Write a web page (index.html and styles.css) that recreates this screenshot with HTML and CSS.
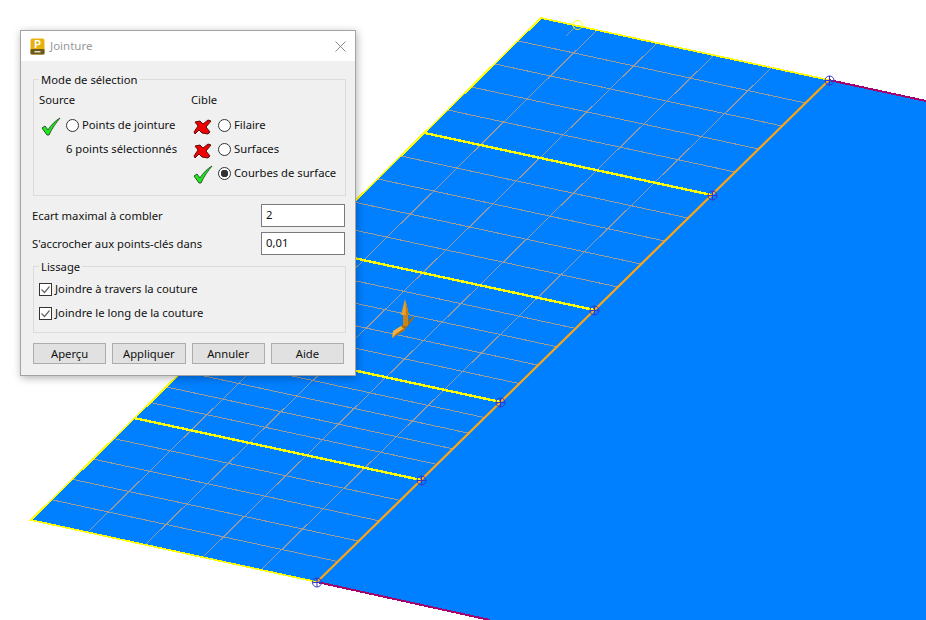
FILE: index.html
```html
<!DOCTYPE html>
<html lang="fr">
<head>
    <meta charset="UTF-8">
    <meta name="viewport" content="width=device-width, initial-scale=1.0">
    <title>Jointure</title>
    <link rel="stylesheet" href="styles.css">
</head>
<body>
    <svg class="viewport" width="926" height="620" viewBox="0 0 926 620">
        <!-- surfaces -->
        <polygon class="face" points="829,80 926,101 926,620 490,620 317,582"/>
        <polygon class="face" points="541,18 829,80 317,582 31,520"/>
        <line class="free-edge" x1="829" y1="80" x2="926" y2="101"/>
        <line class="free-edge" x1="317" y1="582" x2="490" y2="620"/>

        <!-- isoparms along the seam -->
        <line class="iso-along" x1="577" y1="25" x2="566" y2="36"/>
        <line class="iso-along" x1="597" y1="30" x2="88" y2="532"/>
        <line class="iso-along" x1="657" y1="43" x2="145" y2="545"/>
        <line class="iso-along" x1="713" y1="56" x2="203" y2="557"/>
        <line class="iso-along" x1="771" y1="68" x2="261" y2="570"/>

        <!-- isoparms across the seam -->
        <line class="iso-across" x1="518.5" y1="41" x2="805.5" y2="103"/>
        <line class="iso-across" x1="495" y1="64" x2="782" y2="126"/>
        <line class="iso-across" x1="471.6" y1="87" x2="758.6" y2="149"/>
        <line class="iso-across" x1="448" y1="110" x2="735" y2="172"/>
        <line class="iso-across" x1="401" y1="156" x2="688" y2="218"/>
        <line class="iso-across" x1="378" y1="179" x2="665" y2="241"/>
        <line class="iso-across" x1="354" y1="202" x2="641" y2="264"/>
        <line class="iso-across" x1="331" y1="225" x2="618" y2="287"/>
        <line class="iso-across" x1="288.6" y1="266.4" x2="575.6" y2="328.4"/>
        <line class="iso-across" x1="269.9" y1="284.8" x2="556.9" y2="346.8"/>
        <line class="iso-across" x1="251" y1="303.2" x2="538" y2="365.2"/>
        <line class="iso-across" x1="232.3" y1="321.6" x2="519.3" y2="383.6"/>
        <line class="iso-across" x1="197.7" y1="355.6" x2="484.7" y2="417.6"/>
        <line class="iso-across" x1="181.7" y1="371.2" x2="468.7" y2="433.2"/>
        <line class="iso-across" x1="165.8" y1="386.8" x2="452.8" y2="448.8"/>
        <line class="iso-across" x1="150" y1="402.4" x2="437" y2="464.4"/>
        <line class="iso-across" x1="113" y1="438.4" x2="400" y2="500.4"/>
        <line class="iso-across" x1="92" y1="458.8" x2="379" y2="520.8"/>
        <line class="iso-across" x1="72" y1="479.2" x2="359" y2="541.2"/>
        <line class="iso-across" x1="51" y1="499.6" x2="338" y2="561.6"/>

        <!-- selected curves -->
        <polyline class="outline" points="829,80 541,18 31,520 317,582"/>
        <line class="selected" x1="424.7" y1="133" x2="711.7" y2="195"/>
        <line class="selected" x1="307.4" y1="248" x2="594.4" y2="310"/>
        <line class="selected" x1="213.6" y1="340" x2="500.6" y2="402"/>
        <line class="selected" x1="134" y1="418" x2="421" y2="480"/>
        <line class="seam" x1="829" y1="80" x2="317" y2="582"/>

        <!-- join points -->
        <g class="join-point"><circle cx="829.5" cy="80.5" r="4.5"/><path d="M825 80.5h9M829.5 76v9"/></g>
        <g class="join-point"><circle cx="712.5" cy="195.5" r="4.5"/><path d="M708 195.5h9M712.5 191v9"/></g>
        <g class="join-point"><circle cx="594.5" cy="310.5" r="4.5"/><path d="M590 310.5h9M594.5 306v9"/></g>
        <g class="join-point"><circle cx="500.5" cy="402.5" r="4.5"/><path d="M496 402.5h9M500.5 398v9"/></g>
        <g class="join-point"><circle cx="421.5" cy="480.5" r="4.5"/><path d="M417 480.5h9M421.5 476v9"/></g>
        <g class="join-point"><circle cx="317" cy="582.5" r="4.5"/><path d="M312.5 582.5h9M317 578v9"/></g>
        <circle class="start-point" cx="577.5" cy="25" r="4.5"/>

        <!-- manipulator -->
        <path fill="#a96c0a" d="M413 316l1 2-7 9-4 4-3-3 5-6 0-6h3l1 6z"/>
        <path fill="#c98415" d="M403 314h5v12h-5z"/>
        <path fill="#e8a02c" d="M405 299l4 16h-8z"/>
        <path fill="#c47e12" d="M405.500 300l3.500 15h-3z"/>
        <path fill="#f4b040" d="M392 338l1-7 8-5 4 4z"/>
        <path fill="#a86a0c" d="M392 338l13-8-2-1-7 5z"/>
    </svg>

    <div class="dialog">
        <div class="titlebar">
            <svg class="app-icon" width="15" height="17" viewBox="0 0 15 17">
                <rect x="0.5" y="0.5" width="14" height="16" rx="2" fill="#e8b10e"/>
                <rect x="0.5" y="11" width="14" height="5.500" rx="1" fill="#6b5a20"/>
                <rect x="4.500" y="13" width="6" height="1.500" fill="#e8dcae"/>
                <text class="app-letter" x="7.500" y="9.500" text-anchor="middle">P</text>
            </svg>
            <span class="title">Jointure</span>
            <svg class="close" width="11" height="11" viewBox="0 0 11 11"><path d="M.5.5l10 10M10.500.5l-10 10"/></svg>
        </div>
        <div class="dialog-body">
            <fieldset class="group group-mode">
                <legend>Mode de sélection</legend>
                <div class="mode-grid">
                    <div class="mode-col mode-source">
                        <div class="mode-head">Source</div>
                        <div class="mode-row">
                            <svg class="status" width="20" height="20" viewBox="0 0 20 20"><path class="tick" d="M1 11l3-2 3 4C10 8 14 4 19 1c-4 5-8 10-11 17h-2z"/></svg>
                            <span class="radio"></span>
                            <span>Points de jointure</span>
                        </div>
                        <div class="mode-row mode-note">6 points sélectionnés</div>
                    </div>
                    <div class="mode-col mode-target">
                        <div class="mode-head">Cible</div>
                        <div class="mode-row">
                            <svg class="status" width="20" height="20" viewBox="0 0 20 20"><path class="cross" d="M2 5l5-1 3 3 5-4 3 1-5 6 4 5-2 2-6-1-3-3-4 4-1-2 4-6z"/></svg>
                            <span class="radio"></span>
                            <span>Filaire</span>
                        </div>
                        <div class="mode-row">
                            <svg class="status" width="20" height="20" viewBox="0 0 20 20"><path class="cross" d="M2 5l5-1 3 3 5-4 3 1-5 6 4 5-2 2-6-1-3-3-4 4-1-2 4-6z"/></svg>
                            <span class="radio"></span>
                            <span>Surfaces</span>
                        </div>
                        <div class="mode-row">
                            <svg class="status" width="20" height="20" viewBox="0 0 20 20"><path class="tick" d="M1 11l3-2 3 4C10 8 14 4 19 1c-4 5-8 10-11 17h-2z"/></svg>
                            <span class="radio radio-on"></span>
                            <span>Courbes de surface</span>
                        </div>
                    </div>
                </div>
            </fieldset>

            <div class="field first">
                <label>Ecart maximal à combler</label>
                <input class="value" type="text" value="2">
            </div>
            <div class="field">
                <label>S'accrocher aux points-clés dans</label>
                <input class="value" type="text" value="0,01">
            </div>

            <fieldset class="group group-smooth">
                <legend>Lissage</legend>
                <div class="check-row">
                    <svg class="checkbox" width="13" height="13" viewBox="0 0 13 13"><rect x=".5" y=".5" width="12" height="12"/><path d="M2.500 6.500l3 3 5-6"/></svg>
                    <span>Joindre à travers la couture</span>
                </div>
                <div class="check-row">
                    <svg class="checkbox" width="13" height="13" viewBox="0 0 13 13"><rect x=".5" y=".5" width="12" height="12"/><path d="M2.500 6.500l3 3 5-6"/></svg>
                    <span>Joindre le long de la couture</span>
                </div>
            </fieldset>

            <div class="buttons">
                <button>Aperçu</button>
                <button>Appliquer</button>
                <button>Annuler</button>
                <button>Aide</button>
            </div>
        </div>
    </div>
</body>
</html>
```

FILE: styles.css
```css
* {
    margin: 0;
    padding: 0;
    box-sizing: border-box;
}
html, body {
    width: 926px;
    height: 620px;
    overflow: hidden;
    background: #fff;
}
body {
    position: relative;
    font-family: "Noto Sans", sans-serif;
    font-size: 11.25px;
    line-height: 16px;
    color: #111;
}

/* 3D view */
.viewport {
    position: absolute;
    left: 0;
    top: 0;
}
.face {
    fill: #007fff;
}
.free-edge {
    stroke: #a6006a;
    stroke-width: 2;
    shape-rendering: crispEdges;
}
.iso-along {
    stroke: #949aa0;
    stroke-width: 1;
    shape-rendering: crispEdges;
}
.iso-across {
    stroke: #a09c98;
    stroke-width: 1;
    shape-rendering: crispEdges;
}
.outline {
    fill: none;
    stroke: #ffff00;
    stroke-width: 1.7;
    shape-rendering: crispEdges;
}
.selected {
    stroke: #ffff00;
    stroke-width: 2.4;
    shape-rendering: crispEdges;
}
.seam {
    stroke: #ffa50f;
    stroke-width: 2.2;
}
.join-point {
    fill: none;
    stroke: #3636c8;
    stroke-width: 1;
}
.start-point {
    fill: none;
    stroke: #ffff00;
    stroke-width: 1;
}

/* dialog */
.dialog {
    position: absolute;
    left: 20px;
    top: 30px;
    width: 336px;
    height: 346px;
    background: #f0f0f0;
    border: 1px solid #a3a3a3;
    box-shadow: 1px 2px 8px rgba(0, 0, 0, 0.3);
}
.titlebar {
    height: 30px;
    background: #fff;
    display: flex;
    align-items: center;
    padding: 0 9px;
}
.app-icon {
    flex: none;
    margin-right: 5px;
}
.app-letter {
    font-family: "Liberation Sans", sans-serif;
    font-size: 10px;
    font-weight: bold;
    fill: #fff;
}
.title {
    flex: 1;
    color: #999;
    font-size: 11.5px;
}
.close {
    flex: none;
    fill: none;
    stroke: #8a8a8a;
    stroke-width: 1;
}
.dialog-body {
    padding: 9px 9px 0 12px;
}

/* group boxes */
.group {
    border: 1px solid #dcdcdc;
    padding: 0 5px;
    min-width: 0;
}
.group legend {
    padding: 2px 2px 0;
    line-height: 16px;
}
.group-mode {
    height: 126px;
}
.mode-grid {
    display: grid;
    grid-template-columns: 152px 1fr;
    padding-top: 4px;
}
.mode-head {
    height: 16px;
    margin-bottom: 5px;
}
.mode-row {
    height: 24px;
    display: flex;
    align-items: center;
}
.mode-note {
    padding-left: 27px;
}
.status {
    flex: none;
    margin: 3px 5px 0 2px;
}
.tick {
    fill: #1fe81f;
    stroke: #2a5a2a;
    stroke-width: 1;
}
.cross {
    fill: #f00000;
    stroke: #5a1010;
    stroke-width: 1;
}
.radio {
    flex: none;
    width: 13px;
    height: 13px;
    margin-right: 3px;
    border: 1px solid #333;
    border-radius: 50%;
    background: #fff;
}
.radio-on {
    background: radial-gradient(circle, #333 0, #333 3.5px, #fff 4px);
}

/* value fields */
.field {
    display: flex;
    justify-content: space-between;
    align-items: center;
    margin: 5px 0 0 -1px;
    padding-right: 1px;
}
.field.first {
    margin-top: 8px;
}
.value {
    width: 84px;
    height: 23px;
    border: 1px solid #7a7a7a;
    background: #fff;
    padding: 0 4px 2px;
    font: inherit;
    color: #111;
    outline: none;
}

/* smoothing options */
.group-smooth {
    height: 76px;
    margin-top: 2px;
}
.check-row {
    height: 24px;
    display: flex;
    align-items: center;
    padding-top: 4px;
}
.checkbox {
    flex: none;
    margin-right: 3px;
}
.checkbox rect {
    fill: #fff;
    stroke: #333;
}
.checkbox path {
    fill: none;
    stroke: #666;
    stroke-width: 1.2;
}

/* bottom buttons */
.buttons {
    display: flex;
    gap: 6px;
    margin-top: 10px;
    padding-right: 2px;
}
.buttons button {
    flex: 1;
    height: 21px;
    background: #e1e1e1;
    border: 1px solid #adadad;
    font: inherit;
    color: #111;
}
```
